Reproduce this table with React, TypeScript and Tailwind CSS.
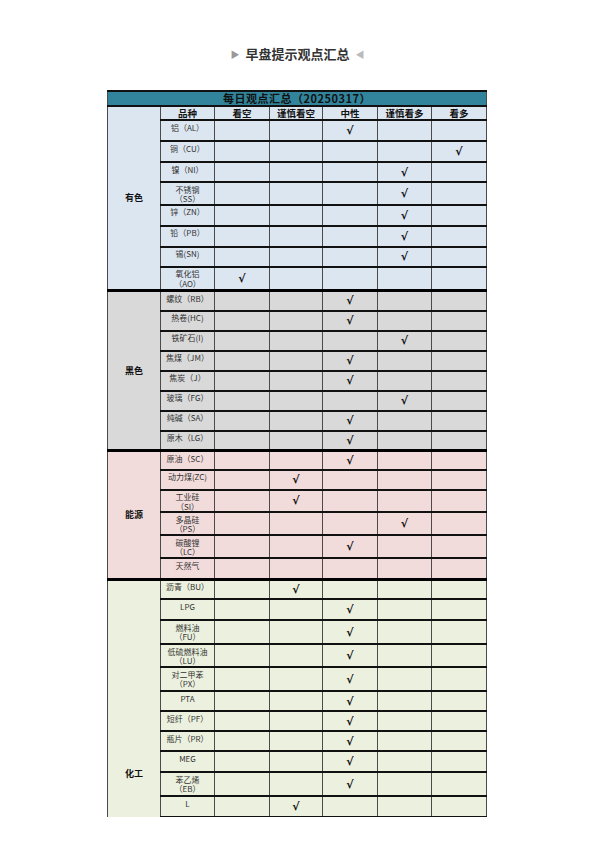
import React from "react";

type Row = { name: string[]; pick: number | null; h: string };
type Section = { label: string; bg: string; rows: Row[] };

const views = ["看空", "谨慎看空", "中性", "谨慎看多", "看多"];

// pick: index into views (0 看空 ... 4 看多)
const sections: Section[] = [
  {
    label: "有色",
    bg: "bg-[#dce6f1]",
    rows: [
      { name: ["铝（AL）"], pick: 2, h: "h-[21px]" },
      { name: ["铜（CU）"], pick: 4, h: "h-[21px]" },
      { name: ["镍（NI）"], pick: 3, h: "h-[20px]" },
      { name: ["不锈钢", "（SS）"], pick: 3, h: "h-[22px]" },
      { name: ["锌（ZN）"], pick: 3, h: "h-[21px]" },
      { name: ["铅（PB）"], pick: 3, h: "h-[21px]" },
      { name: ["锡(SN)"], pick: 3, h: "h-[20px]" },
      { name: ["氧化铝", "（AO）"], pick: 0, h: "h-[24px]" },
    ],
  },
  {
    label: "黑色",
    bg: "bg-[#d9d9d9]",
    rows: [
      { name: ["螺纹（RB）"], pick: 2, h: "h-[20px]" },
      { name: ["热卷(HC)"], pick: 2, h: "h-[20px]" },
      { name: ["铁矿石(I)"], pick: 3, h: "h-[20px]" },
      { name: ["焦煤（JM）"], pick: 2, h: "h-[20px]" },
      { name: ["焦炭（J）"], pick: 2, h: "h-[20px]" },
      { name: ["玻璃（FG）"], pick: 3, h: "h-[20px]" },
      { name: ["纯碱（SA）"], pick: 2, h: "h-[20px]" },
      { name: ["原木（LG）"], pick: 2, h: "h-[20px]" },
    ],
  },
  {
    label: "能源",
    bg: "bg-[#f2dcdb]",
    rows: [
      { name: ["原油（SC）"], pick: 2, h: "h-[19px]" },
      { name: ["动力煤(ZC)"], pick: 1, h: "h-[20px]" },
      { name: ["工业硅", "（SI）"], pick: 1, h: "h-[22px]" },
      { name: ["多晶硅", "（PS）"], pick: 3, h: "h-[23px]" },
      { name: ["碳酸锂", "（LC）"], pick: 2, h: "h-[23px]" },
      { name: ["天然气"], pick: null, h: "h-[21px]" },
    ],
  },
  {
    label: "化工",
    bg: "bg-[#ebf1de]",
    rows: [
      { name: ["沥青（BU）"], pick: 1, h: "h-[20px]" },
      { name: ["LPG"], pick: 2, h: "h-[21px]" },
      { name: ["燃料油", "（FU）"], pick: 2, h: "h-[24px]" },
      { name: ["低硫燃料油", "（LU）"], pick: 2, h: "h-[23px]" },
      { name: ["对二甲苯", "（PX）"], pick: 2, h: "h-[24px]" },
      { name: ["PTA"], pick: 2, h: "h-[20px]" },
      { name: ["短纤（PF）"], pick: 2, h: "h-[20px]" },
      { name: ["瓶片（PR）"], pick: 2, h: "h-[20px]" },
      { name: ["MEG"], pick: 2, h: "h-[21px]" },
      { name: ["苯乙烯", "（EB）"], pick: 2, h: "h-[24px]" },
      { name: ["L"], pick: 1, h: "h-[21px]" },
      { name: ["PP"], pick: 2, h: "h-[21px]" },
      { name: ["PVC（V）"], pick: 2, h: "h-[21px]" },
      { name: ["甲醇（MA）"], pick: 2, h: "h-[21px]" },
      { name: ["尿素（UR）"], pick: 2, h: "h-[21px]" },
      { name: ["纯苯（BZ）"], pick: 2, h: "h-[22px]" },
      { name: ["烧碱（SH）"], pick: 2, h: "h-[22px]" },
      { name: ["橡胶（RU）"], pick: 2, h: "h-[22px]" },
    ],
  },
];

const cell = "border-x-[1.5px] border-x-[#4a4a4a] border-y-2 border-y-[#111] p-0";

export default function App() {
  return (
    <div className="w-[595px] min-h-[842px] bg-white font-['Noto_Sans_CJK_SC',sans-serif]">
      {/* Page title */}
      <div className="flex items-center justify-center gap-[6px] pt-[44px] h-[64px] text-[#333]">
        <span className="text-[9px] text-[#999] leading-none">▶</span>
        <h1 className="text-[13px] font-bold leading-[18px]">早盘提示观点汇总</h1>
        <span className="text-[9px] text-[#bbb] leading-none">◀</span>
      </div>

      {/* Table, clipped like the original picture */}
      <div className="mt-[26px] ml-[107px] w-[380px] h-[727px] overflow-hidden">
        <table className="w-[379px] table-fixed border-collapse text-center text-[8px] leading-[9.5px]">
          <colgroup>
            <col className="w-[53px]" />
            <col className="w-[54px]" />
            <col className="w-[55px]" />
            <col className="w-[53px]" />
            <col className="w-[55px]" />
            <col className="w-[54px]" />
            <col className="w-[55px]" />
          </colgroup>
          <tbody>
            <tr className="h-[15px]">
              <td
                colSpan={7}
                className={`${cell} bg-[#31849b] text-[11px] font-bold leading-[11px] tracking-[0.5px] text-[#111]`}
              >
                每日观点汇总（20250317）
              </td>
            </tr>
            {sections.map((sec, si) =>
              [
                si === 0 ? (
                  <tr key="head" className="h-[14px]">
                    <td rowSpan={sec.rows.length + 1} className={`${cell} ${sec.bg} text-[9px] font-bold text-[#111]`}>
                      {sec.label}
                    </td>
                    <td className={`${cell} ${sec.bg} text-[9.5px] font-bold leading-[10px] text-[#111]`}>品种</td>
                    {views.map((v) => (
                      <td key={v} className={`${cell} ${sec.bg} text-[9.5px] font-bold leading-[10px] text-[#111]`}>
                        {v}
                      </td>
                    ))}
                  </tr>
                ) : null,
                ...sec.rows.map((row, ri) => {
                  const sep = ri === 0 && si > 0 ? "border-t-[3px] border-t-black" : "";
                  return (
                    <tr key={`${sec.label}-${ri}`} className={row.h}>
                      {ri === 0 && si > 0 ? (
                        <td rowSpan={sec.rows.length} className={`${cell} ${sep} ${sec.bg} text-[9px] font-bold text-[#111]`}>
                          {sec.label}
                        </td>
                      ) : null}
                      <td className={`${cell} ${sep} ${sec.bg} align-top pt-[1.5px] text-[#333]`}>
                        {row.name.map((line) => (
                          <div key={line} className="whitespace-nowrap">
                            {line}
                          </div>
                        ))}
                      </td>
                      {views.map((v, vi) => (
                        <td key={v} className={`${cell} ${sep} ${sec.bg} align-middle`}>
                          {row.pick === vi ? (
                            <div className="font-['DejaVu_Sans',sans-serif] text-[11px] font-bold leading-[11px] text-[#111]">
                              √
                            </div>
                          ) : null}
                        </td>
                      ))}
                    </tr>
                  );
                }),
              ]
            )}
          </tbody>
        </table>
      </div>
    </div>
  );
}
